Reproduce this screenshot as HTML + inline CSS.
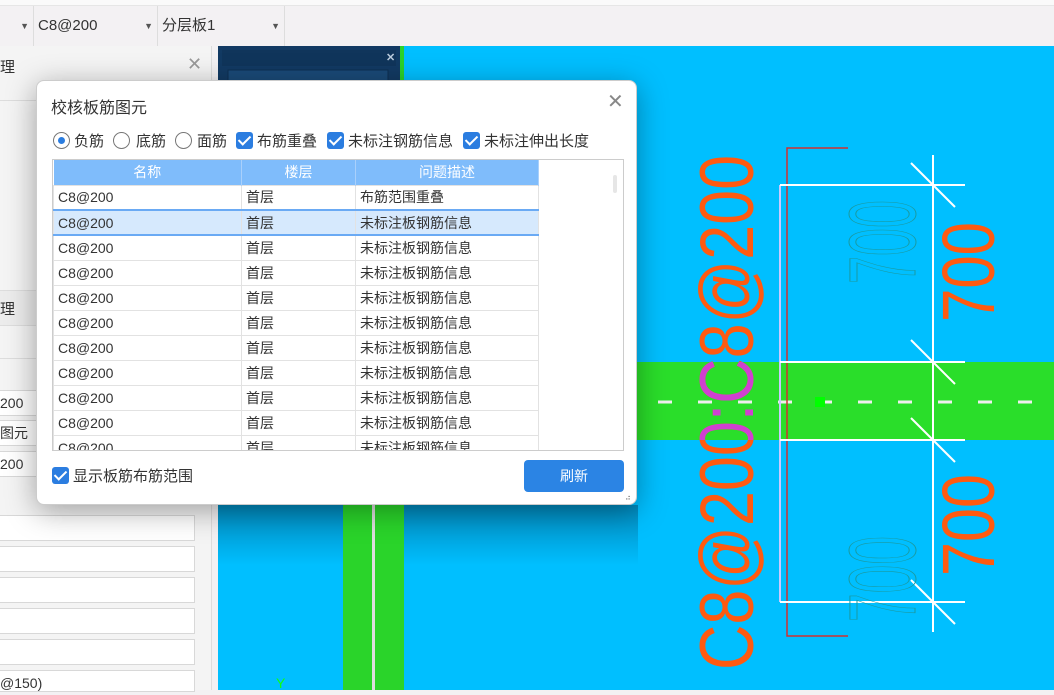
<!DOCTYPE html>
<html><head><meta charset="utf-8"><style>
*{box-sizing:border-box;margin:0;padding:0}
body{width:1054px;height:690px;overflow:hidden;position:relative;background:#f3f1f3;font-family:"Liberation Sans","Noto Sans CJK SC",sans-serif;font-size:14px;color:#333}
.abs{position:absolute}
.dd{position:absolute;top:6px;height:40px;border-right:1px solid #ddd;line-height:40px;padding-left:4px;font-size:15px;color:#333}
.dd span{position:absolute;right:4px;font-size:9px;color:#555}
.inp{position:absolute;left:0;width:195px;height:26px;background:#fff;border:1px solid #d8d8d8;border-left:none;font-size:14px;line-height:24px;padding-left:0}
.dlg{position:absolute;left:36px;top:80px;width:601px;height:425px;background:#fff;border-radius:8px;box-shadow:0 6px 30px rgba(0,0,0,.35);border:1px solid #ccc}
.cb{display:inline-block;width:17px;height:17px;background:#2b7de0;border-radius:3px;position:absolute}
.cb:after{content:"";position:absolute;left:5px;top:1px;width:5px;height:10px;border:solid #fff;border-width:0 2px 2px 0;transform:rotate(45deg)}
.rb{display:inline-block;width:17px;height:17px;border:1px solid #777;border-radius:50%;position:absolute;background:#fff}
.rb.on:after{content:"";position:absolute;left:4px;top:4px;width:7px;height:7px;border-radius:50%;background:#2b7de0}
.lb{position:absolute;font-size:15px;white-space:nowrap;top:-2px}
table{border-collapse:collapse;position:absolute;left:0;top:0}
td{height:25px;border:1px solid #e2e2e2;padding-left:4px;font-size:14px;color:#333;white-space:nowrap;overflow:hidden}
th{height:25px;background:#7fbcfb;color:#fff;font-weight:normal;border-right:1px solid #a9d0fb;font-size:14px}
tr.sel td{background:#d6e9fd;border-top:2px solid #6aaaf4;border-bottom:2px solid #6aaaf4}
</style></head><body>
<div class="abs" style="left:0;top:0;width:1054px;height:6px;background:#fafafa;border-bottom:1px solid #e6e6e6"></div>
<div class="dd" style="left:0;width:34px"><span>▼</span></div>
<div class="dd" style="left:34px;width:124px">C8@200<span>▼</span></div>
<div class="dd" style="left:158px;width:127px">分层板1<span>▼</span></div>
<div class="abs" style="left:0;top:46px;width:212px;height:644px;background:#f4f4f4;border-right:1px solid #ddd"></div>
<div class="abs" style="left:0;top:56px;font-size:15px">理</div>
<div class="abs" style="left:187px;top:54px;font-size:18px;color:#999">✕</div>
<div class="abs" style="left:0;top:100px;width:212px;height:1px;background:#ddd"></div>
<div class="abs" style="left:0;top:290px;width:212px;height:36px;background:#ececec;border-top:1px solid #ddd;border-bottom:1px solid #ddd"></div>
<div class="abs" style="left:0;top:298px;font-size:15px">理</div>
<div class="abs" style="left:0;top:358px;width:212px;height:1px;background:#ddd"></div>
<div class="inp" style="top:390px">200</div>
<div class="inp" style="top:420px">图元</div>
<div class="inp" style="top:451px">200</div>
<div class="inp" style="top:515px"></div>
<div class="inp" style="top:546px"></div>
<div class="inp" style="top:577px"></div>
<div class="inp" style="top:608px"></div>
<div class="inp" style="top:639px"></div>
<div class="inp" style="top:670px;height:22px">@150)</div>

<svg class="abs" style="left:218px;top:46px" width="836" height="644">
<defs><linearGradient id="g" x1="0" y1="0" x2="0" y2="1"><stop offset="0" stop-color="#0088bb"/><stop offset="1" stop-color="#00bfff"/></linearGradient>
<clipPath id="band"><rect x="0" y="316" width="836" height="78"/></clipPath></defs>
<rect width="836" height="644" fill="#00bfff"/>
<rect x="0" y="459" width="420" height="60" fill="url(#g)"/>
<rect x="0" y="0" width="182" height="40" fill="#123a63"/>
<rect x="4" y="4" width="174" height="16" fill="#10355b"/>
<rect x="10" y="24" width="160" height="16" fill="#1a4a78" stroke="#0d2f52"/>
<text x="168" y="15" font-size="11" fill="#bcd" font-weight="bold">✕</text>
<rect x="182" y="0" width="4" height="40" fill="#2ad22a"/>
<rect x="419" y="316" width="417" height="78" fill="#2ade2a"/>
<rect x="125" y="459" width="61" height="185" fill="#2ad42a"/>
<rect x="154" y="459" width="3" height="185" fill="#ddd"/>
<text x="58" y="642" font-size="14" fill="#1f1">Y</text>
<line x1="440" y1="356" x2="822" y2="356" stroke="#eee" stroke-width="3" stroke-dasharray="14,26"/>
<rect x="597" y="351" width="10" height="10" fill="#00ff00"/>
<line x1="562" y1="139" x2="562" y2="556" stroke="#c9c9ff" stroke-width="2"/>
<path d="M630 102H569V590H630" fill="none" stroke="#d03030" stroke-width="1.5"/>
<g stroke="#fff" stroke-width="2" fill="none">
<line x1="715" y1="109" x2="715" y2="586"/>
<line x1="562" y1="139" x2="747" y2="139"/><line x1="562" y1="316" x2="747" y2="316"/>
<line x1="562" y1="394" x2="747" y2="394"/><line x1="562" y1="556" x2="747" y2="556"/>
<line x1="693" y1="117" x2="737" y2="161"/><line x1="693" y1="294" x2="737" y2="338"/>
<line x1="693" y1="372" x2="737" y2="416"/><line x1="693" y1="534" x2="737" y2="578"/>
</g>
<g font-family="Liberation Sans" fill="#ff5a10">
<text transform="translate(535,624) rotate(-90)" font-size="76" textLength="515" lengthAdjust="spacingAndGlyphs">C8@200:C8@200</text>
<text transform="translate(776,276) rotate(-90)" font-size="74" textLength="100" lengthAdjust="spacingAndGlyphs">700</text>
<text transform="translate(776,530) rotate(-90)" font-size="74" textLength="102" lengthAdjust="spacingAndGlyphs">700</text>
</g>
<g clip-path="url(#band)"><text transform="translate(535,624) rotate(-90)" font-family="Liberation Sans" font-size="76" fill="#d040d0" textLength="515" lengthAdjust="spacingAndGlyphs">C8@200:C8@200</text></g>
<g font-family="Liberation Sans" fill="none" stroke="#1a9aa0" stroke-width="1">
<text transform="translate(697,238) rotate(-90)" font-size="95" textLength="84" lengthAdjust="spacingAndGlyphs">700</text>
<text transform="translate(697,576) rotate(-90)" font-size="95" textLength="86" lengthAdjust="spacingAndGlyphs">700</text>
</g>
</svg>

<div class="dlg">
<div class="abs" style="left:14px;top:13px;font-size:16px;color:#333">校核板筋图元</div>
<div class="abs" style="left:570px;top:8px;font-size:20px;color:#888">✕</div>
<div class="abs" style="left:0;top:51px;width:600px;height:20px">
<span class="rb on" style="left:16px"></span><span class="lb" style="left:37px">负筋</span>
<span class="rb" style="left:76px"></span><span class="lb" style="left:99px">底筋</span>
<span class="rb" style="left:138px"></span><span class="lb" style="left:160px">面筋</span>
<span class="cb" style="left:199px"></span><span class="lb" style="left:220px">布筋重叠</span>
<span class="cb" style="left:290px"></span><span class="lb" style="left:311px">未标注钢筋信息</span>
<span class="cb" style="left:426px"></span><span class="lb" style="left:447px">未标注伸出长度</span>
</div>
<div class="abs" style="left:15px;top:78px;width:572px;height:292px;border:1px solid #ccc;overflow:hidden;background:#fff">
<table>
<tr><th style="width:188px">名称</th><th style="width:114px">楼层</th><th style="width:183px">问题描述</th></tr>
<tr><td>C8@200</td><td>首层</td><td>布筋范围重叠</td></tr>
<tr class="sel"><td>C8@200</td><td>首层</td><td>未标注板钢筋信息</td></tr>
<tr><td>C8@200</td><td>首层</td><td>未标注板钢筋信息</td></tr>
<tr><td>C8@200</td><td>首层</td><td>未标注板钢筋信息</td></tr>
<tr><td>C8@200</td><td>首层</td><td>未标注板钢筋信息</td></tr>
<tr><td>C8@200</td><td>首层</td><td>未标注板钢筋信息</td></tr>
<tr><td>C8@200</td><td>首层</td><td>未标注板钢筋信息</td></tr>
<tr><td>C8@200</td><td>首层</td><td>未标注板钢筋信息</td></tr>
<tr><td>C8@200</td><td>首层</td><td>未标注板钢筋信息</td></tr>
<tr><td>C8@200</td><td>首层</td><td>未标注板钢筋信息</td></tr>
<tr><td>C8@200</td><td>首层</td><td>未标注板钢筋信息</td></tr>
</table>
<div class="abs" style="left:560px;top:15px;width:4px;height:18px;background:#e6e6e6;border-radius:2px"></div>
</div>
<div class="abs" style="left:15px;top:386px;width:200px;height:20px"><span class="cb" style="left:0"></span><span class="lb" style="left:21px">显示板筋布筋范围</span></div>
<div class="abs" style="left:487px;top:379px;width:100px;height:32px;background:#2b84e4;border-radius:4px;color:#fff;text-align:center;line-height:32px;font-size:14px">刷新</div>
<div class="abs" style="left:588px;top:412px;font-size:8px;color:#666;letter-spacing:-1px">⠴</div>
</div>
</body></html>
